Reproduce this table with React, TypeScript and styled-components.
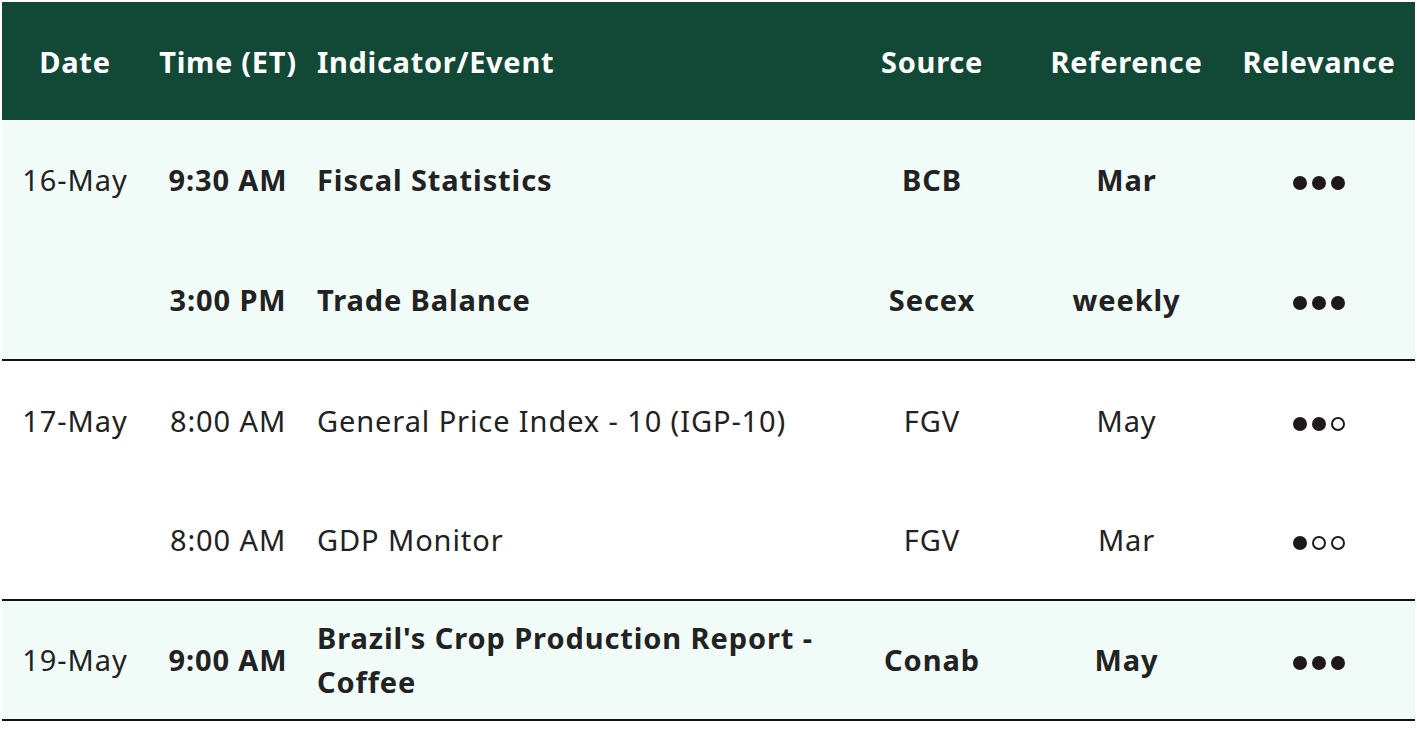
import styled, { createGlobalStyle } from "styled-components";

const GlobalStyle = createGlobalStyle`
  body {
    margin: 0;
    background: #ffffff;
    font-family: "Noto Sans", "Open Sans", sans-serif;
  }
`;

const Wrapper = styled.div`
  padding: 2px 2px;
`;

const Table = styled.table`
  width: 1413px;
  border-collapse: collapse;
  table-layout: fixed;
  color: #222222;
  font-size: 29px;
`;

const HeadRow = styled.tr`
  background: #124836;
  height: 118px;
`;

const HeadCell = styled.th<{ $align?: string }>`
  color: #ffffff;
  font-weight: 700;
  letter-spacing: 0.7px;
  text-align: ${(p) => p.$align || "center"};
  padding: 0 9px;
  white-space: nowrap;
`;

const Row = styled.tr<{ $shaded?: boolean; $divider?: boolean }>`
  height: 120px;
  background: ${(p) => (p.$shaded ? "#f1fbf8" : "#ffffff")};
  border-bottom: ${(p) => (p.$divider ? "2px solid #111111" : "none")};
`;

const Cell = styled.td<{ $bold?: boolean; $align?: string }>`
  font-weight: ${(p) => (p.$bold ? 700 : 400)};
  letter-spacing: 0.9px;
  text-align: ${(p) => p.$align || "center"};
  padding: 0 9px;
  line-height: 44px;
  vertical-align: middle;
`;

const Dots = styled.div`
  display: inline-flex;
  gap: 5px;
  vertical-align: middle;
`;

const Dot = styled.span<{ $filled: boolean }>`
  width: 14px;
  height: 14px;
  border-radius: 50%;
  box-sizing: border-box;
  border: 2px solid #1f1a1a;
  background: ${(p) => (p.$filled ? "#1f1a1a" : "transparent")};
`;

type Event = {
  date?: string;
  time: string;
  name: string;
  source: string;
  ref: string;
  level: number;
  bold: boolean;
  shaded: boolean;
  divider?: boolean;
};

const events: Event[] = [
  { date: "16-May", time: "9:30 AM", name: "Fiscal Statistics", source: "BCB", ref: "Mar", level: 3, bold: true, shaded: true },
  { time: "3:00 PM", name: "Trade Balance", source: "Secex", ref: "weekly", level: 3, bold: true, shaded: true, divider: true },
  { date: "17-May", time: "8:00 AM", name: "General Price Index - 10 (IGP-10)", source: "FGV", ref: "May", level: 2, bold: false, shaded: false },
  { time: "8:00 AM", name: "GDP Monitor", source: "FGV", ref: "Mar", level: 1, bold: false, shaded: false, divider: true },
  { date: "19-May", time: "9:00 AM", name: "Brazil's Crop Production Report - Coffee", source: "Conab", ref: "May", level: 3, bold: true, shaded: true, divider: true },
];

const Relevance = ({ level }: { level: number }) => (
  <Dots>
    {[0, 1, 2].map((i) => (
      <Dot key={i} $filled={i < level} />
    ))}
  </Dots>
);

const App = () => {
  return (
    <>
      <GlobalStyle />
      <Wrapper>
        <Table>
          <colgroup>
            <col style={{ width: 146 }} />
            <col style={{ width: 160 }} />
            <col style={{ width: 526 }} />
            <col style={{ width: 196 }} />
            <col style={{ width: 193 }} />
            <col style={{ width: 192 }} />
          </colgroup>
          <thead>
            <HeadRow>
              <HeadCell>Date</HeadCell>
              <HeadCell>Time (ET)</HeadCell>
              <HeadCell $align="left">Indicator/Event</HeadCell>
              <HeadCell>Source</HeadCell>
              <HeadCell>Reference</HeadCell>
              <HeadCell>Relevance</HeadCell>
            </HeadRow>
          </thead>
          <tbody>
            {events.map((e, i) => (
              <Row key={i} $shaded={e.shaded} $divider={e.divider}>
                <Cell>{e.date}</Cell>
                <Cell $bold={e.bold}>{e.time}</Cell>
                <Cell $bold={e.bold} $align="left">{e.name}</Cell>
                <Cell $bold={e.bold}>{e.source}</Cell>
                <Cell $bold={e.bold}>{e.ref}</Cell>
                <Cell>
                  <Relevance level={e.level} />
                </Cell>
              </Row>
            ))}
          </tbody>
        </Table>
      </Wrapper>
    </>
  );
};

export default App;
